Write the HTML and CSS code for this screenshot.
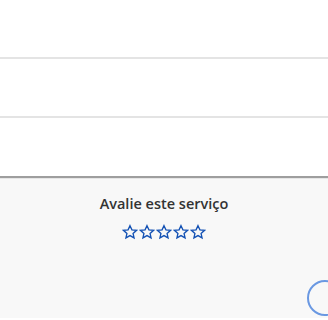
FILE: index.html
```html
<!DOCTYPE html>
<html lang="pt-BR">
<head>
    <meta charset="UTF-8">
    <meta name="viewport" content="width=device-width, initial-scale=1.0">
    <title>Avalie este serviço</title>
    <link rel="stylesheet" href="styles.css">
</head>
<body>
    <div class="list">
        <div class="list-item"></div>
        <div class="list-item"></div>
        <div class="list-item"></div>
    </div>

    <section class="rating">
        <h2 class="rating-title">Avalie este serviço</h2>
        <div class="stars">
            <svg class="star" viewBox="0 0 24 24"><path d="M12 2.5l2.9 6.3 6.9.7-5.2 4.6 1.5 6.8L12 17.4l-6.1 3.5 1.5-6.8-5.2-4.6 6.9-.7z"/></svg>
            <svg class="star" viewBox="0 0 24 24"><path d="M12 2.5l2.9 6.3 6.9.7-5.2 4.6 1.5 6.8L12 17.4l-6.1 3.5 1.5-6.8-5.2-4.6 6.9-.7z"/></svg>
            <svg class="star" viewBox="0 0 24 24"><path d="M12 2.5l2.9 6.3 6.9.7-5.2 4.6 1.5 6.8L12 17.4l-6.1 3.5 1.5-6.8-5.2-4.6 6.9-.7z"/></svg>
            <svg class="star" viewBox="0 0 24 24"><path d="M12 2.5l2.9 6.3 6.9.7-5.2 4.6 1.5 6.8L12 17.4l-6.1 3.5 1.5-6.8-5.2-4.6 6.9-.7z"/></svg>
            <svg class="star" viewBox="0 0 24 24"><path d="M12 2.5l2.9 6.3 6.9.7-5.2 4.6 1.5 6.8L12 17.4l-6.1 3.5 1.5-6.8-5.2-4.6 6.9-.7z"/></svg>
        </div>
        <button class="float-btn" aria-label="Voltar ao topo"></button>
    </section>
</body>
</html>
```

FILE: styles.css
```css
body {
    margin: 0;
    background-color: #ffffff;
    font-family: 'Open Sans', 'Lato', sans-serif;
    color: #333333;
}
.list-item {
    height: 57px;
    border-bottom: 2px solid #e4e4e4; /* Light divider */
    background-color: #ffffff;
}
.list-item:last-child {
    height: 58px;
    border-bottom: 2px solid #9e9e9e; /* Darker edge above the rating area */
}
.rating {
    position: relative;
    height: 140px;
    background-color: #f8f8f8;
    box-shadow: inset 0 1px 0 #e6e6e6;
    text-align: center;
    padding-top: 16px;
    box-sizing: border-box;
    overflow: hidden;
}
.rating-title {
    margin: 0;
    font-size: 14.5px;
    font-weight: 600;
    color: #333333;
    line-height: 20px;
}
.stars {
    display: flex;
    justify-content: center;
    gap: 1px;
    margin-top: 10px;
}
.star {
    width: 16px;
    height: 16px;
    fill: none;
    stroke: #1351b4; /* Blue outline */
    stroke-width: 2;
    stroke-linejoin: miter;
}
.float-btn {
    position: absolute;
    left: 307px;
    top: 102px;
    width: 36px;
    height: 36px;
    border: 2px solid #6a98e2;
    border-radius: 50%;
    background-color: #f8f8f8;
    padding: 0;
}
```
